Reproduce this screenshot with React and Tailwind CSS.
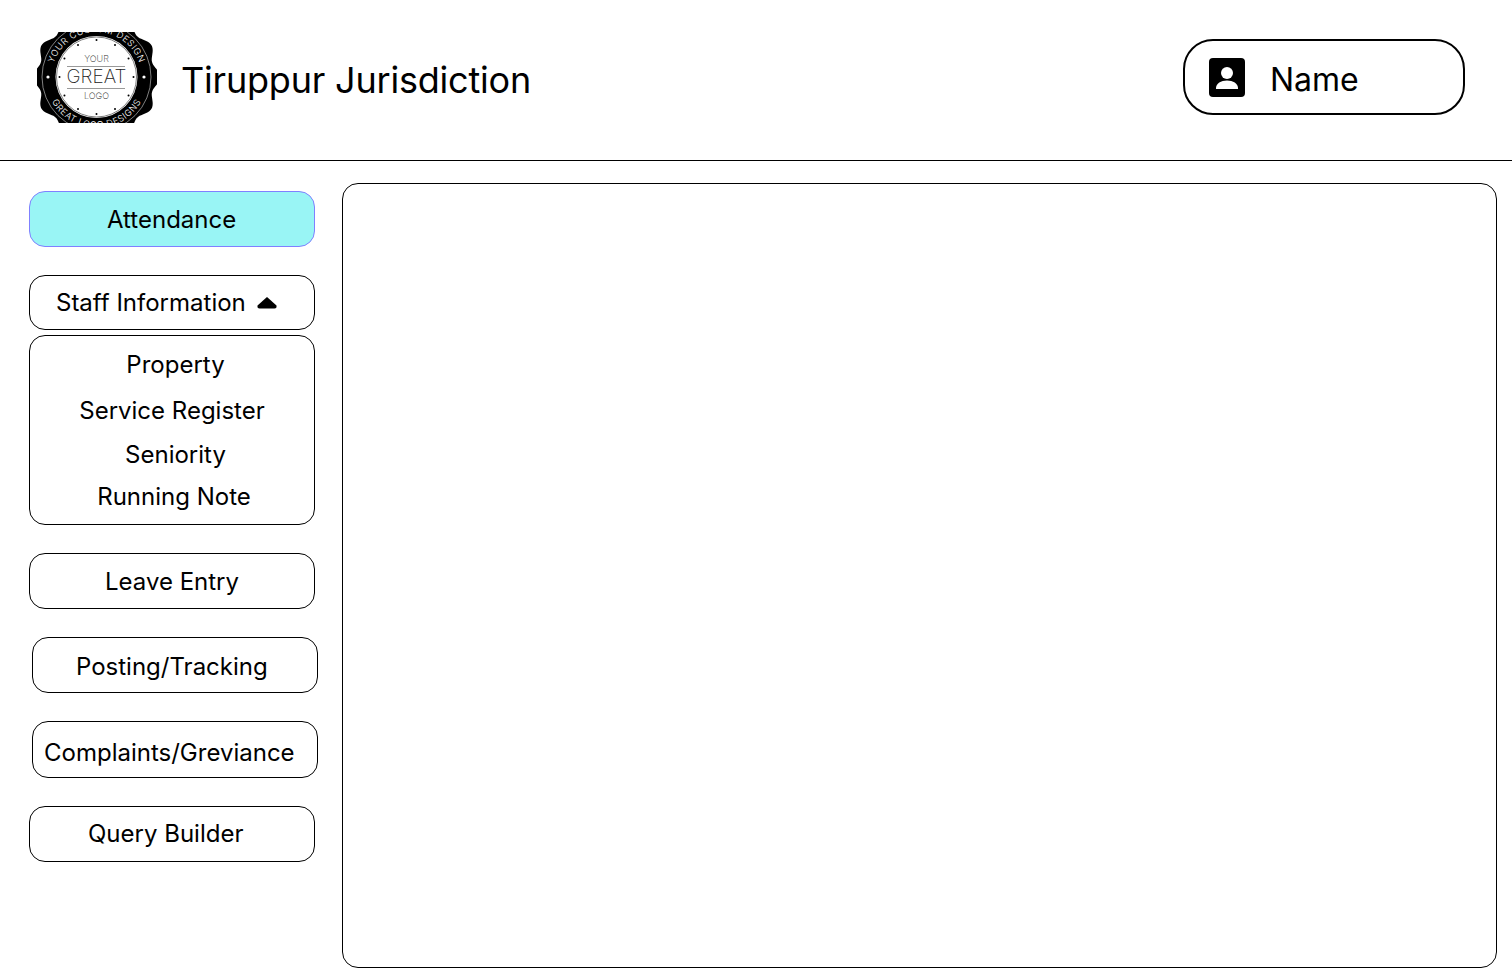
import React from 'react';

function Logo() {
  // scalloped seal, cropped at top and bottom like the reference image
  const points = [];
  const n = 240;
  for (let i = 0; i <= n; i++) {
    const a = (i / n) * Math.PI * 2;
    const r = 60.5 + 3 * Math.cos(a * 12);
    points.push(`${(59.5 + r * Math.cos(a)).toFixed(2)},${(45 + r * Math.sin(a)).toFixed(2)}`);
  }
  const dots = [];
  for (let i = 0; i < 12; i++) {
    const a = (i / 12) * Math.PI * 2;
    dots.push(<circle key={i} cx={59.5 + 37 * Math.cos(a)} cy={45 + 37 * Math.sin(a)} r="1" fill="#000" />);
  }
  return (
    <svg width="120" height="91" viewBox="0 0 120 91" className="block shrink-0">
      <defs>
        <clipPath id="crop"><rect x="0" y="0" width="120" height="91" /></clipPath>
        <path id="arcTop" d="M 59.5 45 m -45 0 a 45 45 0 0 1 90 0" />
        <path id="arcBottom" d="M 59.5 45 m -51 0 a 51 51 0 0 0 102 0" />
      </defs>
      <g clipPath="url(#crop)">
        <polygon points={points.join(' ')} fill="#000" />
        <circle cx="59.5" cy="45" r="54.5" fill="none" stroke="#fff" strokeWidth="0.5" />
        <circle cx="59.5" cy="45" r="41" fill="#fff" />
        <circle cx="59.5" cy="45" r="40" fill="none" stroke="#000" strokeWidth="0.5" />
        <text fontSize="9" fill="#fff" letterSpacing="0.6" fontFamily="Inter, sans-serif" fontWeight="300">
          <textPath href="#arcTop" startOffset="50%" textAnchor="middle">YOUR CUSTOM DESIGN</textPath>
        </text>
        <text fontSize="9" fill="#fff" letterSpacing="0.6" fontFamily="Inter, sans-serif" fontWeight="300">
          <textPath href="#arcBottom" startOffset="50%" textAnchor="middle">GREAT LOGO DESIGNS</textPath>
        </text>
        {dots}
        <circle cx="11" cy="45" r="1.6" fill="#fff" />
        <circle cx="107" cy="45" r="1.6" fill="#fff" />
        <text x="59.5" y="30" fontSize="9" textAnchor="middle" fill="#222" fontFamily="Inter, sans-serif" fontWeight="200">YOUR</text>
        <line x1="30" y1="34.5" x2="88" y2="34.5" stroke="#333" strokeWidth="0.5" />
        <text x="59.5" y="51" fontSize="19" textAnchor="middle" fill="#222" fontFamily="Inter, sans-serif" fontWeight="200">GREAT</text>
        <line x1="30" y1="56.5" x2="88" y2="56.5" stroke="#333" strokeWidth="0.5" />
        <text x="59.5" y="67" fontSize="9" textAnchor="middle" fill="#222" fontFamily="Inter, sans-serif" fontWeight="200">LOGO</text>
      </g>
    </svg>
  );
}

function ProfileIcon() {
  return (
    <svg width="36" height="39" viewBox="0 0 36 39" className="block shrink-0 mt-0.5">
      <rect width="36" height="39" rx="4" fill="#000" />
      <circle cx="18" cy="15" r="6" fill="#fff" />
      <path d="M7 30 C7 25.5 12 22.5 18 22.5 C24 22.5 29 25.5 29 30 L29 31 L7 31 Z" fill="#fff" />
    </svg>
  );
}

export default function App() {
  return (
    <div className="min-h-[980px] bg-white text-black font-['Inter',sans-serif] [font-optical-sizing:none]">
      <header className="h-[161px] border-b border-black flex items-center justify-between pl-[37px] pr-[47px]">
        <div className="flex items-center gap-[24px] -mt-[5px]">
          <Logo />
          <h1 className="text-[36px] leading-none font-normal tracking-[-0.2px] mt-[5px]">Tiruppur Jurisdiction</h1>
        </div>
        <div className="w-[282px] h-[76px] border-2 border-black rounded-[30px] flex items-center pl-6 gap-[25px] -mt-[7px]">
          <ProfileIcon />
          <span className="text-[32px] leading-none mt-[7px]">Name</span>
        </div>
      </header>

      <div className="flex items-start pl-[29px] pt-[22px] pr-[15px]">
        <aside className="w-[289px] mt-2 text-[24px] leading-none">
          <div className="w-[286px] h-14 bg-[#99f5f5] border border-[#8080ff] rounded-2xl flex items-center pl-[77px] pt-0.5">Attendance</div>
          <div className="w-[286px] h-[55px] mt-7 border border-black rounded-2xl flex items-center pl-[26px] gap-[11px]">
            <span>Staff Information</span>
            <svg width="20" height="13" viewBox="0 0 20 13" className="block">
              <path d="M10 1 L19.5 9.5 Q20 12.5 17.5 12.5 L2.5 12.5 Q0 12.5 0.5 9.5 Z" fill="#000" />
            </svg>
          </div>
          <div className="w-[286px] h-[190px] mt-[5px] border border-black rounded-2xl flex flex-col items-center">
            <span className="mt-[17px] ml-[7px]">Property</span>
            <span className="mt-[22px]">Service Register</span>
            <span className="mt-5 ml-[7px]">Seniority</span>
            <span className="mt-[18px] ml-1">Running Note</span>
          </div>
          <div className="w-[286px] h-14 mt-7 border border-black rounded-2xl flex items-center justify-center pt-0.5">Leave Entry</div>
          <div className="w-[286px] h-14 mt-7 ml-[3px] border border-black rounded-2xl flex items-center pl-[43px] pt-1">Posting/Tracking</div>
          <div className="w-[286px] h-[57px] mt-7 ml-[3px] border border-black rounded-2xl flex items-center pl-[11px] pt-1.5">Complaints/Greviance</div>
          <div className="w-[286px] h-14 mt-7 border border-black rounded-2xl flex items-center pl-[58px]">Query Builder</div>
        </aside>
        <main className="flex-1 ml-6 h-[785px] border border-black rounded-2xl" />
      </div>
    </div>
  );
}
